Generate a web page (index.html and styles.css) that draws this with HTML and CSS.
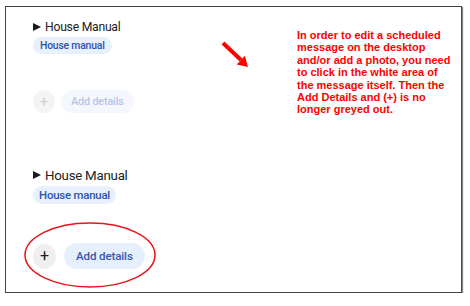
FILE: index.html
```html
<!DOCTYPE html>
<html>
<head>
<meta charset="utf-8">
<link rel="stylesheet" href="styles.css">
</head>
<body>
<div class="frame">
  <div class="left">
    <section class="msg msg-a">
      <div class="heading"><span class="tri"></span>House Manual</div>
      <span class="tag">House manual</span>
      <div class="actions">
        <span class="plus">+</span>
        <span class="add">Add details</span>
      </div>
    </section>
    <section class="msg msg-b">
      <div class="heading"><span class="tri"></span>House Manual</div>
      <span class="tag">House manual</span>
      <div class="actions">
        <span class="plus">+</span>
        <span class="add">Add details</span>
      </div>
    </section>
  </div>
  <p class="note">In order to edit a scheduled<br>message on the desktop<br>and/or add a photo, you need<br>to click in the white area of<br>the message itself. Then the<br>Add Details and (+) is no<br>longer greyed out.</p>
  <svg class="marks" width="456" height="285" viewBox="0 0 456 285">
    <line x1="217" y1="36" x2="235" y2="53" stroke="#ff0000" stroke-width="4"/>
    <polygon points="242,60 230.7,57.4 238.9,48.8" fill="#ff0000"/>
    <ellipse cx="84" cy="248" rx="65" ry="32" fill="none" stroke="#e8141c" stroke-width="1.5"/>
  </svg>
</div>
</body>
</html>
```
FILE: styles.css
```css
html, body {
  margin: 0;
  padding: 0;
  background: #ffffff;
}
.frame {
  position: relative;
  margin: 6px 0 0 5px;
  width: 455px;
  height: 285px;
  border: 1px solid #444;
  box-shadow: 1px 1px 1px #8a8a8a;
  display: flex;
  font-family: Roboto, "Liberation Sans", sans-serif;
  color: #222;
}
.left {
  width: 264px;
  padding-left: 27px;
  display: flex;
  flex-direction: column;
  align-items: flex-start;
}
.msg {
  display: flex;
  flex-direction: column;
  align-items: flex-start;
}
.heading {
  display: flex;
  align-items: center;
  gap: 4px;
  height: 16px;
  font-size: 12.2px;
  letter-spacing: -0.25px;
  color: #222;
}
.tri {
  width: 0;
  height: 0;
  border-left: 8px solid #1a1a1a;
  border-top: 4.5px solid transparent;
  border-bottom: 4.5px solid transparent;
}
.tag {
  display: inline-flex;
  align-items: center;
  height: 17px;
  padding: 0 7px;
  border-radius: 9px;
  background: #e8f0fd;
  color: #2d52ad;
  font-size: 10.4px;
  letter-spacing: -0.2px;
  font-weight: 500;
}
.actions {
  display: flex;
  align-items: center;
  gap: 6px;
}
.plus {
  display: flex;
  align-items: center;
  justify-content: center;
  width: 22px;
  height: 23px;
  border-radius: 50%;
  font-size: 14px;
  line-height: 1;
}
.add {
  display: inline-flex;
  align-items: center;
  height: 23px;
  padding: 0 10px;
  border-radius: 12px;
  font-size: 10.8px;
  letter-spacing: -0.15px;
  font-weight: 500;
}
.msg-a {
  margin-top: 12px;
}
.msg-a .tag {
  margin-top: 2px;
}
.msg-a .actions {
  margin-top: 36px;
}
.msg-a .plus {
  background: #f4f4f4;
  color: #cfcfcf;
}
.msg-a .add {
  background: #f4f8fe;
  color: #b5c4e6;
}
.msg-b {
  margin-top: 54px;
}
.msg-b .heading {
  font-size: 13.3px;
  gap: 4px;
}
.msg-b .tag {
  margin-top: 3px;
  height: 18px;
  padding: 0 6px;
  font-size: 11.4px;
}
.msg-b .actions {
  margin-top: 39px;
  gap: 8px;
}
.msg-b .plus {
  width: 23px;
  height: 25px;
  background: #efefef;
  color: #1e1e1e;
  font-size: 16px;
}
.msg-b .add {
  height: 26px;
  padding: 0 12px;
  border-radius: 13px;
  background: #e6effc;
  color: #3656b3;
  font-size: 11.6px;
}
.note {
  margin: 22px 0 0 0;
  font-family: "Liberation Sans", Arial, sans-serif;
  font-weight: bold;
  font-size: 11px;
  line-height: 12.4px;
  color: #ff0000;
  white-space: nowrap;
}
.marks {
  position: absolute;
  left: 0;
  top: 0;
  pointer-events: none;
}
```
